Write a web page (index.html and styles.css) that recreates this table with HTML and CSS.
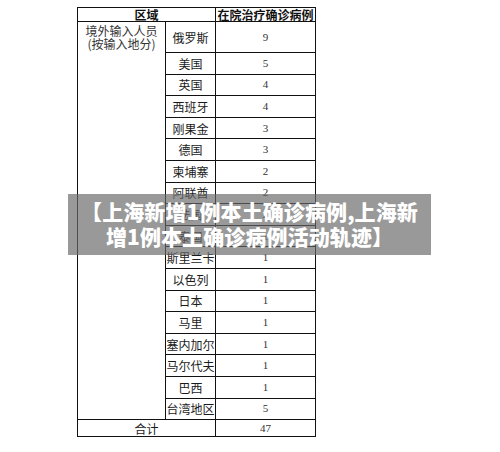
FILE: index.html
```
<!DOCTYPE html>
<html lang="zh-CN">
<head>
<meta charset="utf-8">
<link rel="stylesheet" href="styles.css">
</head>
<body>
<div class="page">
  <table class="cases">
    <colgroup><col class="c1"><col class="c2"><col class="c3"></colgroup>
    <tr class="head"><th colspan="2">区域</th><th>在院治疗确诊病例</th></tr>
    <tr class="first"><td class="region" rowspan="18">境外输入人员<br>(按输入地分)</td><td class="country">俄罗斯</td><td class="num">9</td></tr>
    <tr><td class="country">美国</td><td class="num">5</td></tr>
    <tr><td class="country">英国</td><td class="num">4</td></tr>
    <tr><td class="country">西班牙</td><td class="num">4</td></tr>
    <tr><td class="country">刚果金</td><td class="num">3</td></tr>
    <tr><td class="country">德国</td><td class="num">3</td></tr>
    <tr><td class="country">柬埔寨</td><td class="num">2</td></tr>
    <tr><td class="country">阿联酋</td><td class="num">2</td></tr>
    <tr><td class="country">法国</td><td class="num">2</td></tr>
    <tr><td class="country">泰国</td><td class="num">1</td></tr>
    <tr><td class="country">斯里兰卡</td><td class="num">1</td></tr>
    <tr><td class="country">以色列</td><td class="num">1</td></tr>
    <tr><td class="country">日本</td><td class="num">1</td></tr>
    <tr><td class="country">马里</td><td class="num">1</td></tr>
    <tr><td class="country">塞内加尔</td><td class="num">1</td></tr>
    <tr><td class="country">马尔代夫</td><td class="num">1</td></tr>
    <tr><td class="country">巴西</td><td class="num">1</td></tr>
    <tr><td class="country">台湾地区</td><td class="num">5</td></tr>
    <tr class="total"><td colspan="2" class="total-label">合计</td><td class="num">47</td></tr>
  </table>
  <div class="banner">【上海新增1例本土确诊病例,上海新增1例本土确诊病例活动轨迹】</div>
</div>
</body>
</html>
```
FILE: styles.css
```
html, body {
  margin: 0;
  padding: 0;
  background: #ffffff;
}
.page {
  position: relative;
  width: 500px;
  height: 452px;
  overflow: hidden;
  padding-top: 7px;
  padding-left: 77px;
  box-sizing: border-box;
}
.cases {
  border-collapse: collapse;
  table-layout: fixed;
  width: 238px;
  font-family: "Noto Sans CJK SC", sans-serif;
  font-size: 12px;
  color: #1a1a1a;
}
.c1 { width: 88px; }
.c2 { width: 50px; }
.c3 { width: 100px; }
.cases th, .cases td {
  border: 1px solid #111;
  padding: 0;
  text-align: center;
  line-height: 13px;
  white-space: nowrap;
}
.cases tr { height: 21.6px; }
.cases tr.head { height: 14px; }
.cases tr.first { height: 31px; }
.cases tr.total { height: 17px; }
.cases th {
  font-weight: bold;
  font-size: 12px;
  line-height: 13px;
  color: #111;
}
.region {
  vertical-align: top;
  padding-top: 2px !important;
  line-height: 13px;
  color: #333;
}
.country {
  border-left: 1.5px solid #111 !important;
  border-right: 1.5px solid #111 !important;
}
.num {
  font-family: "Liberation Serif", serif;
  font-size: 11px;
  color: #333;
}
.total-label {
  font-size: 12px;
}
.banner {
  position: absolute;
  left: 68px;
  top: 194px;
  width: 363px;
  height: 61px;
  box-sizing: border-box;
  padding: 5px 8px 0;
  background: rgba(105, 105, 105, 0.68);
  color: #ffffff;
  font-family: "Noto Sans CJK SC", sans-serif;
  font-weight: 900;
  font-size: 21px;
  line-height: 25px;
  text-align: center;
  letter-spacing: 0.1px;
}
```
